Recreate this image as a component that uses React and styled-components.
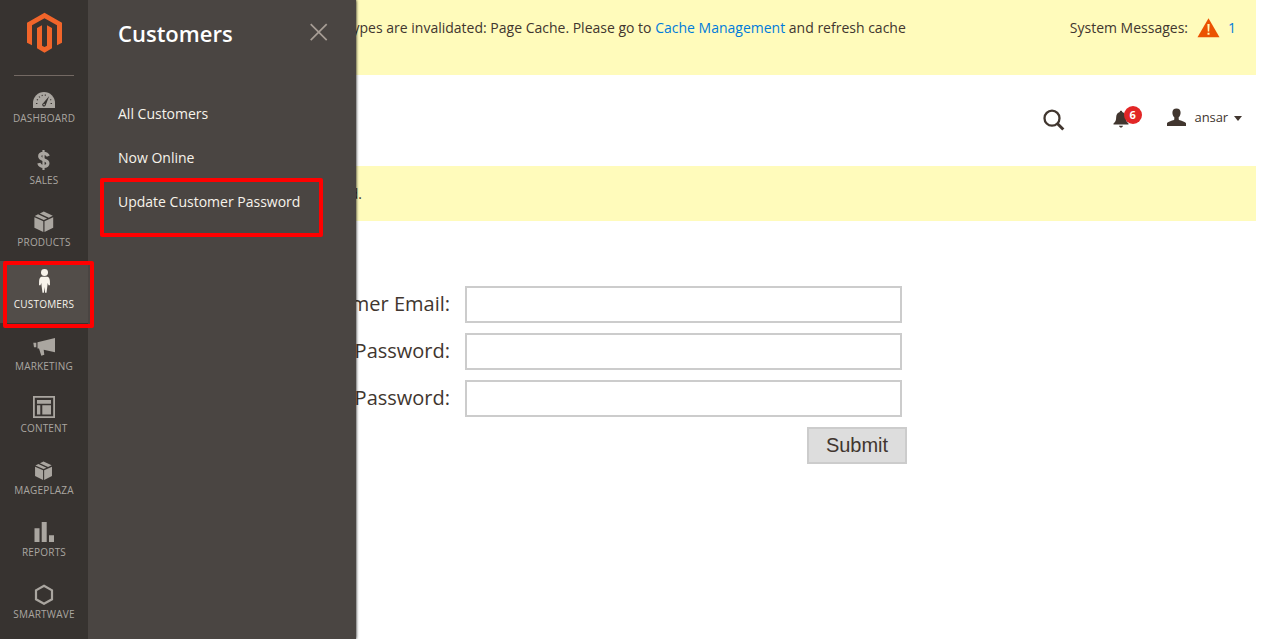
import React from 'react';
import styled, { createGlobalStyle, css } from 'styled-components';

const Global = createGlobalStyle`
  * { box-sizing: border-box; }
  body { margin: 0; background: #fff; color: #41362f; font-family: "Open Sans", "Noto Sans", sans-serif; font-size: 14px; }
`;

const Shell = styled.div`
  position: relative;
  display: flex;
  width: 1286px;
  height: 639px;
  overflow: hidden;
`;

const Nav = styled.nav`
  width: 88px;
  flex: none;
  background: #373330;
  display: flex;
  flex-direction: column;
`;

const LogoArea = styled.div`
  height: 75px;
  flex: none;
  padding: 12px 0 0 26px;
  svg { display: block; }
`;

const Items = styled.div`
  display: flex;
  flex-direction: column;
  &::before {
    content: "";
    height: 1px;
    margin: 0 14px -1px;
    background: #736963;
    flex: none;
  }
`;

const NavItem = styled.a`
  height: 62px;
  flex: none;
  padding-top: 6px;
  display: flex;
  flex-direction: column;
  align-items: center;
  color: #aaa6a0;
  font-size: 10px;
  line-height: 18px;
  letter-spacing: 0.2px;
  text-transform: uppercase;
  ${(p) => p.$active && css`background: #524d49; color: #f7f3eb;`}
  svg { display: block; flex: none; }
`;

const Flyout = styled.aside`
  position: absolute;
  left: 88px;
  top: 0;
  width: 268px;
  height: 639px;
  background: #4a4542;
  box-shadow: 0 0 3px #000;
  clip-path: inset(0 -6px 0 0);
  padding: 0 28px 0 30px;
`;

const FlyoutHead = styled.div`
  height: 92px;
  padding-top: 18px;
  display: flex;
  align-items: flex-start;
  justify-content: space-between;
  svg { display: block; margin-top: 5px; }
`;

const FlyoutTitle = styled.h2`
  margin: 0;
  font-size: 22px;
  line-height: 30px;
  font-weight: 600;
  color: #fff;
`;

const FlyoutLink = styled.a`
  display: block;
  height: 44px;
  line-height: 44px;
  color: #f7f3eb;
  white-space: nowrap;
`;

const Highlight = styled.div`
  position: absolute;
  left: ${(p) => p.$x}px;
  top: ${(p) => p.$y}px;
  width: ${(p) => p.$w}px;
  height: ${(p) => p.$h}px;
  border: 4px solid #f00;
  border-radius: 2px;
`;

const Main = styled.main`
  flex: 1;
  display: flex;
  flex-direction: column;
`;

const Notice = styled.div`
  height: ${(p) => p.$h}px;
  flex: none;
  margin-right: 30px;
  padding: 18px 20px 0 0;
  background: #fffbbb;
  display: flex;
  line-height: 20px;
`;

const NoticeText = styled.div`
  width: ${(p) => p.$w}px;
  text-align: right;
  white-space: nowrap;
`;

const Link = styled.a`
  color: #007bdb;
`;

const Messages = styled.div`
  margin-left: auto;
  display: flex;
  align-items: flex-start;
  svg { display: block; margin: 0 8px 0 9px; }
`;

const Header = styled.header`
  height: 91px;
  flex: none;
  padding: 31px 44px 0 0;
  display: flex;
  justify-content: flex-end;
  align-items: flex-start;
  svg { display: block; }
`;

const Search = styled.div`
  margin: 3px 48px 0 0;
`;

const Bell = styled.div`
  position: relative;
  width: 30px;
  padding-top: 4px;
  margin-right: 23px;
`;

const Badge = styled.span`
  position: absolute;
  left: 11px;
  top: 0;
  width: 18px;
  height: 18px;
  border-radius: 9px;
  background: #e22626;
  color: #fff;
  font-size: 11px;
  font-weight: 700;
  line-height: 18px;
  text-align: center;
`;

const Account = styled.div`
  display: flex;
  align-items: flex-start;
  font-size: 13px;
  line-height: 22px;
  span { margin: 0 6px 0 8px; letter-spacing: -0.1px; }
`;

const Caret = styled.i`
  margin-top: 10px;
  border: 4px solid transparent;
  border-top: 5px solid #41362f;
  border-bottom: 0;
`;

const Form = styled.form`
  margin: 65px 0 0;
  display: flex;
  flex-direction: column;
  gap: 10px;
`;

const Field = styled.label`
  display: flex;
  align-items: flex-start;
  height: 37px;
  font-size: 20px;
  line-height: 35px;
`;

const FieldName = styled.span`
  width: 362px;
  margin-right: 15px;
  text-align: right;
`;

const Input = styled.input`
  width: 437px;
  height: 37px;
  border: 2px solid #ccc;
  background: #fff;
  outline: 0;
`;

const Submit = styled.button`
  margin-left: 719px;
  width: 100px;
  height: 37px;
  padding: 0;
  border: 2px solid #ccc;
  background: #ddd;
  color: #41362f;
  font: 20px/33px "Liberation Sans", sans-serif;
`;

const dark = '#373330';

const Box = () => (
  <>
    <path d="M4.4 12.3 13.3 16.3V27L4.4 22.7zM23.2 12.3 14.5 16.3V27l8.7-4.3z" />
    <path d="m4.8 10.9 3.3-1.7 9 4.2-3.3 1.6zM9.800 8.400l4-1.800 9 4.200-4 2z" />
  </>
);

const icons = {
  Dashboard: (
    <>
      <path d="M3 27v-5a11 11 0 0 1 22 0v5z" />
      <path d="M6 22.5h1.4M6.8 18.5l1.2.6M9 15.5l.9 1M12 13.8l.4 1.2M15.3 13.6v1.2M21.2 18.4l-.9.5M20.6 22.5h1.4" stroke={dark} strokeWidth="1.1" />
      <path d="m19.2 15-6.1 7.2a1.8 1.8 0 1 0 2.6 2.1z" fill={dark} />
      <circle cx="14.1" cy="23.6" r=".8" />
    </>
  ),
  Sales: (
    <>
      <path d="M18.3 13.2c-.8-2-2.2-2.9-4.6-2.9-2.5 0-4 1-4 3 0 4.6 8.2 2.2 8.2 7 0 2.1-1.7 3.2-4.3 3.2-2.6 0-4.2-1.1-4.8-3.3" fill="none" stroke="currentColor" strokeWidth="3.2" />
      <path d="M12.4 7h2.2v20h-2.2z" />
    </>
  ),
  Products: <Box />,
  Customers: (
    <>
      <ellipse cx="14.5" cy="5.5" rx="3.5" ry="3.4" />
      <path d="M11.5 9.7h6c1.6.6 2.2 2 2.4 4.3l.1 4.300h-1.500l-.8-2.300-.4 3.700-.8 6h-1.400l-.6-5.700-.6 5.700h-1.400l-.8-6-.4-3.700-.8 2.300H9l.1-4.300c.2-2.300.8-3.700 2.400-4.300z" />
    </>
  ),
  Marketing: (
    <path d="M3.300 13.800h3v4.400H4zM7.500 13.200 25 9v14.300l-11.300-2.600.6 5.100-3 1-2.300-7.300H7.500z" />
  ),
  Content: (
    <>
      <path d="M3.900 5.900h20.200v20.200H3.900z" fill="none" stroke="currentColor" strokeWidth="1.800" />
      <path d="M7 9h14v3.700H7zM7 14.300h3.300v9.200H7zM12.300 14.300H21v9.200h-8.700z" />
    </>
  ),
  Mageplaza: <g transform="translate(1.100 2.600) scale(.9)"><Box /></g>,
  Reports: <path d="M4.500 13.200h5V27h-5zM11.700 7h5v20h-5zM19 20.200h5V27h-5z" />,
  Smartwave: <path d="m14 8.800 8 4.500v9L14 26.800l-8-4.500v-9z" fill="none" stroke="currentColor" strokeWidth="2.200" />,
};

export default function App() {
  return (
    <Shell>
      <Global />
      <Nav>
        <LogoArea>
          <svg width="36" height="42" viewBox="78 36 108 126" fill="#f1652a">
            <path d="M133.500 38 186 68v60l-15 8V76l-37.500-21L96 76v60l-15-8V68z" />
            <path d="m111 84 15-8v61l7.500 4 7.500-4V76l15 8v61l-22.500 13L111 145z" />
          </svg>
        </LogoArea>
        <Items>
          {Object.entries(icons).map(([name, drawing]) => (
            <NavItem key={name} $active={name === 'Customers'}>
              <svg width="28" height="28" viewBox="0 0 28 28" fill="currentColor">{drawing}</svg>
              {name}
            </NavItem>
          ))}
        </Items>
      </Nav>
      <Main>
        <Notice $h={75}>
          <NoticeText $w={817.8}>
            Types are invalidated: Page Cache. Please go to <Link>Cache Management</Link> and refresh cache
          </NoticeText>
          <Messages>
            System Messages:
            <svg width="23" height="20" viewBox="0 0 23 20">
              <path d="M11.500.2 22.500 19.200H.5z" fill="#eb5202" />
              <path d="M10.400 6h2.200l-.4 7.500h-1.400zM10.500 14.700h2v2h-2z" fill="#fffbbb" />
            </svg>
            <Link>1</Link>
          </Messages>
        </Notice>
        <Header>
          <Search>
            <svg width="22" height="22" viewBox="0 0 22 22" fill="none" stroke="#41362f">
              <circle cx="9" cy="9.200" r="7.500" strokeWidth="2.300" />
              <path d="m14.300 14.500 6 6" strokeWidth="3" />
            </svg>
          </Search>
          <Bell>
            <svg width="16" height="18" viewBox="0 0 16 18" fill="#41362f">
              <path d="M8 .8c.8 0 1.200.5 1.200 1.200 2.300.6 3.500 2.500 3.600 5 .1 3.300.7 5 2.700 6.400v1H.5v-1C2.500 12 3.100 10.300 3.200 7c.1-2.500 1.300-4.400 3.600-5C6.800 1.300 7.200.8 8 .8zM6 15.700h4c-.3 1.200-1 1.800-2 1.800s-1.700-.6-2-1.800z" />
            </svg>
            <Badge>6</Badge>
          </Bell>
          <Account>
            <svg width="21" height="21" viewBox="0 0 21 21" fill="#41362f">
              <path d="M10.500 2.500c2.600 0 4.200 1.500 4.100 4.300 0 1.900-.7 3.500-1.900 4.500v2.200c.5 1.200 6.200 1.500 7.300 3.800V20H1v-2.700c1.100-2.300 6.800-2.600 7.300-3.800v-2.200c-1.200-1-1.900-2.600-1.900-4.500-.1-2.800 1.500-4.300 4.100-4.300z" />
            </svg>
            <span>ansar</span>
            <Caret />
          </Account>
        </Header>
        <Notice $h={55}>
          <NoticeText $w={274}>d.</NoticeText>
        </Notice>
        <Form>
          <Field><FieldName>Customer Email:</FieldName><Input /></Field>
          <Field><FieldName>Password:</FieldName><Input /></Field>
          <Field><FieldName>Password:</FieldName><Input /></Field>
          <Submit type="button">Submit</Submit>
        </Form>
      </Main>
      <Flyout>
        <FlyoutHead>
          <FlyoutTitle>Customers</FlyoutTitle>
          <svg width="18" height="18" viewBox="0 0 18 18" stroke="#a79d95" strokeWidth="1.700">
            <path d="m.700 1.200 16 16M16.700 1.200l-16 16" />
          </svg>
        </FlyoutHead>
        <FlyoutLink>All Customers</FlyoutLink>
        <FlyoutLink>Now Online</FlyoutLink>
        <FlyoutLink>Update Customer Password</FlyoutLink>
      </Flyout>
      <Highlight $x={3} $y={261} $w={91} $h={67} />
      <Highlight $x={100} $y={178} $w={223} $h={59} />
    </Shell>
  );
}
